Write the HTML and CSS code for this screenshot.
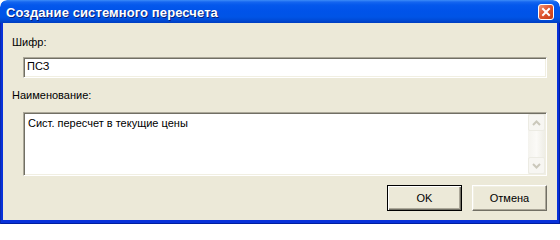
FILE: index.html
```html
<!DOCTYPE html>
<html lang="ru">
<head>
<meta charset="utf-8">
<title>Создание системного пересчета</title>
<link rel="stylesheet" href="styles.css">
</head>
<body>
<div class="window">
  <div class="titlebar">
    <span class="title">Создание системного пересчета</span>
    <span class="close-btn">
      <svg width="16" height="16" viewBox="0 0 16 16">
        <defs>
          <linearGradient id="cg" x1="0" y1="0" x2="1" y2="1">
            <stop offset="0" stop-color="#f19a7c"/>
            <stop offset="0.45" stop-color="#e0552f"/>
            <stop offset="1" stop-color="#c23a14"/>
          </linearGradient>
        </defs>
        <rect x="0.5" y="0.5" width="15" height="15" rx="2.5" fill="url(#cg)" stroke="#ffffff"/>
        <path d="M5 5 L11 11 M11 5 L5 11" stroke="#ffffff" stroke-width="2" stroke-linecap="square"/>
      </svg>
    </span>
  </div>
  <div class="frame">
    <div class="client">
      <div class="label">Шифр:</div>
      <div class="field input">ПСЗ</div>
      <div class="label label-gap">Наименование:</div>
      <div class="field memo">
        <div class="memo-text">Сист. пересчет в текущие цены</div>
        <div class="scrollbar">
          <div class="sb-btn">
            <svg width="9" height="6" viewBox="0 0 9 6"><path d="M1 5 L4.5 1.5 L8 5" fill="none" stroke="#cbc8bb" stroke-width="2"/></svg>
          </div>
          <div class="sb-track"></div>
          <div class="sb-btn">
            <svg width="9" height="6" viewBox="0 0 9 6"><path d="M1 1 L4.5 4.5 L8 1" fill="none" stroke="#cbc8bb" stroke-width="2"/></svg>
          </div>
        </div>
      </div>
      <div class="buttons">
        <div class="btn btn-default">OK</div>
        <div class="btn">Отмена</div>
      </div>
    </div>
  </div>
</div>
</body>
</html>
```

FILE: styles.css
```css
html, body {
  margin: 0;
  padding: 0;
  background: #ffffff;
}

.window {
  width: 560px;
  height: 224px;
  display: flex;
  flex-direction: column;
  font-family: "Liberation Sans", Arial, sans-serif;
  font-size: 11px;
  color: #000000;
  overflow: hidden;
  border-radius: 7px 7px 0 0;
}

.titlebar {
  height: 23px;
  flex: none;
  display: flex;
  align-items: center;
  justify-content: space-between;
  padding: 0 6px 0 6px;
  box-sizing: border-box;
  background: linear-gradient(to bottom,
    #3c8cf8 0px, #1566f0 2px, #0458ec 5px, #0053e9 11px,
    #0054e6 17px, #004bd8 20px, #003dbf 23px);
  border-radius: 7px 7px 0 0;
}

.title {
  font-family: "Liberation Sans", Arial, sans-serif;
  font-weight: bold;
  font-size: 13px;
  color: #ffffff;
  text-shadow: 1px 1px 0 #0a1f77;
  letter-spacing: 0.1px;
  padding-top: 1px;
}

.close-btn {
  width: 16px;
  height: 16px;
  display: block;
  margin-top: 1px;
}

.close-btn svg {
  display: block;
}

.frame {
  flex: 1;
  display: flex;
  background: #0831d9;
  padding: 0 3px 4px 3px;
  box-shadow: inset 1px 0 0 #0a2ab0, inset -1px 0 0 #001ea0, inset 0 -1px 0 #001ea0;
}

.client {
  flex: 1;
  background: #ece9d8;
  display: flex;
  flex-direction: column;
  padding: 13px 10px 0 9px;
}

.label {
  height: 13px;
  line-height: 13px;
}

.label-gap {
  margin-top: 11px;
}

.field {
  background: #ffffff;
  margin-left: 11px;
  border-top: 1px solid #aca899;
  border-left: 1px solid #aca899;
  border-right: 1px solid #ffffff;
  border-bottom: 1px solid #ffffff;
  box-shadow: inset 1px 1px 0 #716f64, inset -1px -1px 0 #f1efe2;
}

.input {
  margin-top: 8px;
  height: 21px;
  box-sizing: border-box;
  line-height: 17px;
  padding-left: 3px;
}

.memo {
  margin-top: 10px;
  height: 64px;
  box-sizing: border-box;
  display: flex;
  padding: 1px 1px 1px 1px;
}

.memo-text {
  flex: 1;
  padding: 3px 0 0 3px;
  line-height: 13px;
}

.scrollbar {
  width: 17px;
  display: flex;
  flex-direction: column;
  background: linear-gradient(to right, #f4f3ee, #fbfaf7 50%, #eeede5);
}

.sb-btn {
  height: 17px;
  box-sizing: border-box;
  border: 1px solid #ecebe3;
  border-radius: 2px;
  background: #f7f6f2;
  display: flex;
  align-items: center;
  justify-content: center;
}

.sb-track {
  flex: 1;
}

.buttons {
  margin-top: 9px;
  display: flex;
  justify-content: flex-end;
  gap: 10px;
}

.btn {
  width: 75px;
  height: 26px;
  box-sizing: border-box;
  display: flex;
  align-items: center;
  justify-content: center;
  background: #ece9d8;
  border-top: 1px solid #ffffff;
  border-left: 1px solid #ffffff;
  border-right: 1px solid #716f64;
  border-bottom: 1px solid #716f64;
  box-shadow: inset -1px -1px 0 #aca899, inset 1px 1px 0 #f1efe2;
}

.btn-default {
  border: 1px solid #000000;
  box-shadow: inset 1px 1px 0 #ffffff, inset -1px -1px 0 #716f64, inset -2px -2px 0 #aca899;
}
```
